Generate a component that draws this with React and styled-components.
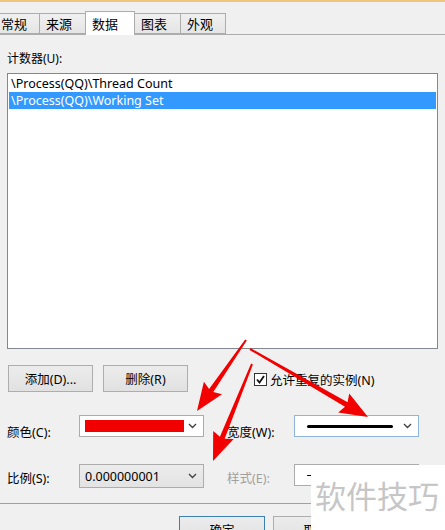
import styled, { createGlobalStyle } from "styled-components";

const GlobalStyle = createGlobalStyle`
  html, body { margin: 0; padding: 0; }
  body {
    background: #f0f0f0;
    font-family: "Noto Sans", "Noto Sans CJK SC", sans-serif;
    font-size: 12px;
    color: #000;
  }
`;

const tabs = [
    { label: "常规", width: 46 },
    { label: "来源", width: 47 },
    { label: "数据", width: 50, active: true },
    { label: "图表", width: 47 },
    { label: "外观", width: 46 },
];

const counters = [
    "\\Process(QQ)\\Thread Count",
    "\\Process(QQ)\\Working Set",
];

// red annotation arrows laid over the dialog
const arrows = [
    [246, 338, 197, 409],
    [250, 347, 368, 415],
    [252, 362, 213, 459],
];

function arrowPoints(x1, y1, x2, y2) {
    const dx = x2 - x1, dy = y2 - y1, len = Math.hypot(dx, dy);
    const ux = dx / len, uy = dy / len, nx = -uy, ny = ux;
    const head = 25, hw = 11, w0 = 1, w1 = 2.6;
    const bx = x2 - ux * head, by = y2 - uy * head;
    return [
        [x1 + nx * w0, y1 + ny * w0],
        [bx + nx * w1, by + ny * w1],
        [bx + nx * hw - ux * 3, by + ny * hw - uy * 3],
        [x2, y2],
        [bx - nx * hw - ux * 3, by - ny * hw - uy * 3],
        [bx - nx * w1, by - ny * w1],
        [x1 - nx * w0, y1 - ny * w0],
    ].map(p => p.map(v => v.toFixed(1)).join(",")).join(" ");
}

function Chevron() {
    return (
        <ChevronSvg width="9" height="6" viewBox="0 0 9 6">
            <polyline points="1,1 4.5,4.5 8,1" fill="none" stroke="#444" strokeWidth="1.4" />
        </ChevronSvg>
    );
}

export default function App() {
    return (
        <>
            <GlobalStyle />
            <Window>
                <TabStrip>
                    {tabs.map(t => (
                        <Tab key={t.label} $width={t.width} $active={t.active}>{t.label}</Tab>
                    ))}
                </TabStrip>

                <Panel>
                    <FieldLabel>计数器(U):</FieldLabel>
                    <ListBox>
                        {counters.map((c, i) => (
                            <ListItem key={c} $selected={i === 1}>{c}</ListItem>
                        ))}
                    </ListBox>

                    <ButtonRow>
                        <Button>添加(D)...</Button>
                        <Button>删除(R)</Button>
                        <CheckLabel>
                            <CheckBox>
                                <svg width="11" height="11" viewBox="0 0 11 11">
                                    <polyline points="2,5.5 4.5,8.5 9,2" fill="none" stroke="#111" strokeWidth="1.8" />
                                </svg>
                            </CheckBox>
                            允许重复的实例(N)
                        </CheckLabel>
                    </ButtonRow>

                    <FormRow $top={23}>
                        <RowLabel $offset={10}>颜色(C):</RowLabel>
                        <Combo>
                            <ColorSwatch />
                            <Chevron />
                        </Combo>
                        <RowLabel $offset={10}>宽度(W):</RowLabel>
                        <Combo $focus>
                            <LineSample />
                            <Chevron />
                        </Combo>
                    </FormRow>

                    <FormRow $top={23}>
                        <RowLabel $offset={7}>比例(S):</RowLabel>
                        <Combo $readonly $height={24}>
                            <ComboText>0.000000001</ComboText>
                            <Chevron />
                        </Combo>
                        <RowLabel $offset={7} $disabled>样式(E):</RowLabel>
                        <Combo>
                            <LineSample $thin />
                            <Chevron />
                        </Combo>
                    </FormRow>
                </Panel>

                <Separator />

                <FooterRow>
                    <Button $default $width={86}>确定</Button>
                    <Button $width={86}>取消</Button>
                </FooterRow>

                <Watermark>软件技巧</Watermark>

                <ArrowLayer width="445" height="530" viewBox="0 0 445 530">
                    {arrows.map((a, i) => (
                        <polygon key={i} points={arrowPoints(...a)} fill="#f20000" />
                    ))}
                </ArrowLayer>
            </Window>
        </>
    );
}

const Window = styled.div`
    position: relative;
    width: 445px;
    height: 530px;
    overflow: hidden;
    background: #f0f0f0;
    border-top: 2px solid #f1c47c;
    box-sizing: border-box;
`;

const TabStrip = styled.div`
    display: flex;
    align-items: flex-end;
    height: 23px;
    margin-top: 9px;
    margin-left: -6px;
    border-bottom: 1px solid #acacac;
`;

const Tab = styled.div`
    box-sizing: border-box;
    width: ${p => p.$width}px;
    height: ${p => (p.$active ? 24 : 21)}px;
    margin-bottom: ${p => (p.$active ? -1 : 0)}px;
    margin-right: -1px;
    padding-left: 6px;
    display: flex;
    align-items: center;
    font-size: 13px;
    border: 1px solid #acacac;
    border-bottom: ${p => (p.$active ? "none" : "1px solid #acacac")};
    background: ${p => (p.$active ? "#ffffff" : "linear-gradient(#f0f0f0, #e5e5e5)")};
    position: relative;
    z-index: ${p => (p.$active ? 1 : 0)};
`;

const Panel = styled.div`
    display: flex;
    flex-direction: column;
    padding: 0 7px;
`;

const FieldLabel = styled.div`
    margin-top: 16px;
    height: 16px;
    line-height: 16px;
    font-size: 12px;
`;

const ListBox = styled.div`
    margin-top: 6px;
    width: 431px;
    height: 276px;
    box-sizing: border-box;
    border: 1px solid #828790;
    background: #fff;
    padding: 1px 1px;
`;

const ListItem = styled.div`
    height: 17px;
    line-height: 17px;
    padding-left: 2px;
    font-size: 12.5px;
    color: ${p => (p.$selected ? "#fff" : "#000")};
    background: ${p => (p.$selected ? "#3399ff" : "transparent")};
`;

const ButtonRow = styled.div`
    display: flex;
    align-items: center;
    gap: 10px;
    margin-top: 16px;
    padding-left: 1px;
`;

const Button = styled.div`
    box-sizing: border-box;
    width: ${p => p.$width || 85}px;
    height: 27px;
    display: flex;
    align-items: center;
    justify-content: center;
    font-size: 12.5px;
    border: 1px solid ${p => (p.$default ? "#3c7fb1" : "#adadad")};
    background: linear-gradient(#ececec, #e1e1e1);
`;

const CheckLabel = styled.label`
    display: flex;
    align-items: center;
    gap: 3px;
    margin-left: 56px;
    margin-top: 1px;
    font-size: 12.5px;
`;

const CheckBox = styled.span`
    box-sizing: border-box;
    width: 13px;
    height: 13px;
    border: 1px solid #333;
    background: #fff;
    display: flex;
    align-items: center;
    justify-content: center;
`;

const FormRow = styled.div`
    display: grid;
    grid-template-columns: 72px 125px 23px 67px 125px;
    align-items: start;
    margin-top: ${p => p.$top}px;
    & > :nth-child(3) { grid-column: 4; }
    & > :nth-child(4) { grid-column: 5; }
`;

const RowLabel = styled.div`
    padding-top: ${p => p.$offset}px;
    line-height: 16px;
    font-size: 12.5px;
    color: ${p => (p.$disabled ? "#a0a0a0" : "#000")};
`;

const Combo = styled.div`
    box-sizing: border-box;
    height: ${p => p.$height || 22}px;
    display: flex;
    align-items: center;
    padding: 0 6px 0 5px;
    border: 1px solid ${p => (p.$focus ? "#8fb5dd" : "#acacac")};
    background: ${p => (p.$readonly ? "linear-gradient(#ececec, #e3e3e3)" : "#fff")};
`;

const ColorSwatch = styled.div`
    width: 99px;
    height: 12px;
    background: #f20000;
`;

const LineSample = styled.div`
    margin-left: 7px;
    width: 86px;
    height: ${p => (p.$thin ? 1 : 3)}px;
    border-radius: 2px;
    background: #000;
`;

const ComboText = styled.span`
    font-size: 12.5px;
`;

const ChevronSvg = styled.svg`
    margin-left: auto;
    display: block;
`;

const Separator = styled.div`
    margin-top: 15px;
    height: 1px;
    background: #a0a0a0;
`;

const FooterRow = styled.div`
    display: flex;
    gap: 8px;
    margin-top: 12px;
    padding-left: 179px;
`;

const Watermark = styled.div`
    position: absolute;
    left: 311px;
    top: 463px;
    right: 0;
    bottom: 0;
    background: #fff;
    color: #c6c6c6;
    font-family: "Noto Sans CJK SC", sans-serif;
    font-size: 31px;
    padding: 10px 0 0 4px;
    letter-spacing: 0;
    line-height: 40px;
`;

const ArrowLayer = styled.svg`
    position: absolute;
    left: 0;
    top: 0;
    pointer-events: none;
`;
